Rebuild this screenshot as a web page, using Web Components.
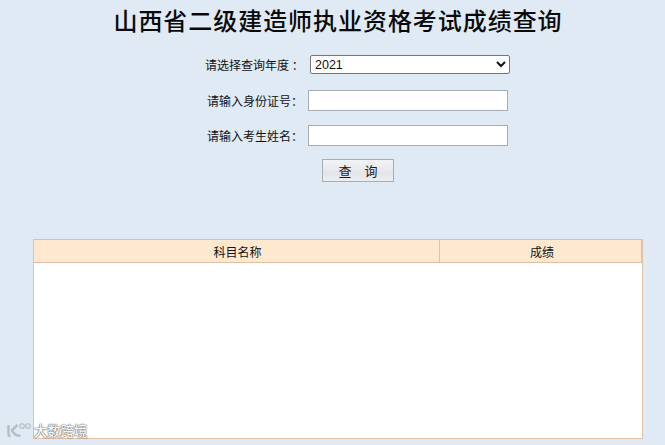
<!DOCTYPE html>
<html lang="zh"><head><meta charset="utf-8"><title>成绩查询</title>
<style>
html,body{margin:0;height:445px;overflow:hidden;background:#e0eaf4}
body{font-family:"Noto Sans CJK SC","Liberation Sans",sans-serif;color:#111}
</style></head><body>
<query-page></query-page>
<template id="tp-page"><style>
:host{display:block;width:665px;height:445px;position:relative;padding-top:4px;box-sizing:border-box}
h1{margin:0 0 0 11px;height:32px;line-height:32px;text-align:center;font-size:24px;font-weight:500;letter-spacing:.95px;color:#0a0a0a}
.form{display:flex;flex-direction:column;margin-top:18px}
.btn-row{display:flex;justify-content:center;padding-left:51px;margin-top:13px}
result-table{margin:57px 0 0 33px}
</style>
<h1>山西省二级建造师执业资格考试成绩查询</h1>
<div class="form">
<form-row label="请选择查询年度 ：" kind="select" style="--lx:205px;--fx:310px"></form-row>
<form-row label="请输入身份证号：" style="--lx:207px;--fx:308px;margin-top:15px"></form-row>
<form-row label="请输入考生姓名：" style="--lx:207px;--fx:308px;margin-top:14px"></form-row>
</div>
<div class="btn-row"><query-button>查　询</query-button></div>
<result-table></result-table>
<water-mark></water-mark>
</template>
<template id="tp-row"><style>
:host{display:grid;grid-template-columns:var(--lx) calc(var(--fx) - var(--lx)) 200px;align-items:center;font-size:12px;height:21px}
.l{grid-column:2;white-space:pre;line-height:21px;color:#111}
input,select{grid-column:3;box-sizing:border-box;width:200px;margin:0;font:12px/1 "Liberation Sans",sans-serif}
input{height:21px;border:1px solid #a5acb5;background:#fff;padding:0 4px;outline:0}
select{height:19px;border:1px solid #767676;border-radius:2px;background:#fff;color:#111;font-size:12.5px;padding:0}
</style><span class="l"></span></template>
<template id="tp-btn"><style>
:host{display:block}
button{display:block;box-sizing:border-box;width:72px;height:23px;margin:0;padding:0;border:1px solid #a6adb8;background:linear-gradient(#f2f3f6,#e3e5ea 65%,#eceef1);font:13px/21px "Noto Sans CJK SC",sans-serif;color:#1b1b28;white-space:pre}
</style><button><slot></slot></button></template>
<template id="tp-table"><style>
:host{display:block;box-sizing:border-box;width:610px;height:200px;border:1px solid #e3bfa3;background:#fff}
.head{display:grid;grid-template-columns:405px 1fr;height:23px;box-sizing:border-box;background:#fee8d0;border-bottom:1px solid #e3bfa3;border-right:1px solid #e3bfa3;font-size:12px;line-height:23px;text-align:center;color:#111}
.head div:first-child{padding-left:2px}
.head div+div{border-left:1px solid #e3bfa3;padding-left:3px}
</style><div class="head"><div>科目名称</div><div>成绩</div></div></template>
<template id="tp-wm"><style>
:host{display:flex;position:absolute;left:6px;top:422px;align-items:flex-start;opacity:.95}
svg{display:block}
span{font-size:13.3px;font-weight:500;line-height:18px;color:#f6f8fa;margin-left:2px;text-shadow:0 0 1px #666,0 0 1px #666,0 0 2px #888}
</style>
<svg width="26" height="17" viewBox="0 0 26 17" fill="none" stroke="#b3bac2"><path stroke-width="2.4" d="M2.5 3v9c0 1.500 1 2 2 2"/><path stroke-width="2.4" d="M11.500 3 6 8c1.500 4 5 6 8.500 5.500"/><circle cx="16" cy="4" r="2.3" stroke-width="1.1"/><circle cx="22" cy="4" r="2.3" stroke-width="1.1"/></svg>
<span>大数跨境</span></template>
<script>
function mk(tag,id,init){customElements.define(tag,class extends HTMLElement{connectedCallback(){if(this.shadowRoot)return;const r=this.attachShadow({mode:"open"});r.appendChild(document.getElementById(id).content.cloneNode(true));init&&init.call(this,r)}})}
mk("query-button","tp-btn");
mk("result-table","tp-table");
mk("water-mark","tp-wm");
mk("form-row","tp-row",function(r){
 r.querySelector(".l").textContent=this.getAttribute("label");
 let c;
 if(this.getAttribute("kind")==="select"){c=document.createElement("select");const o=document.createElement("option");o.textContent="2021";c.appendChild(o)}
 else{c=document.createElement("input");c.type="text"}
 r.appendChild(c)});
mk("query-page","tp-page");
</script>
</body></html>
